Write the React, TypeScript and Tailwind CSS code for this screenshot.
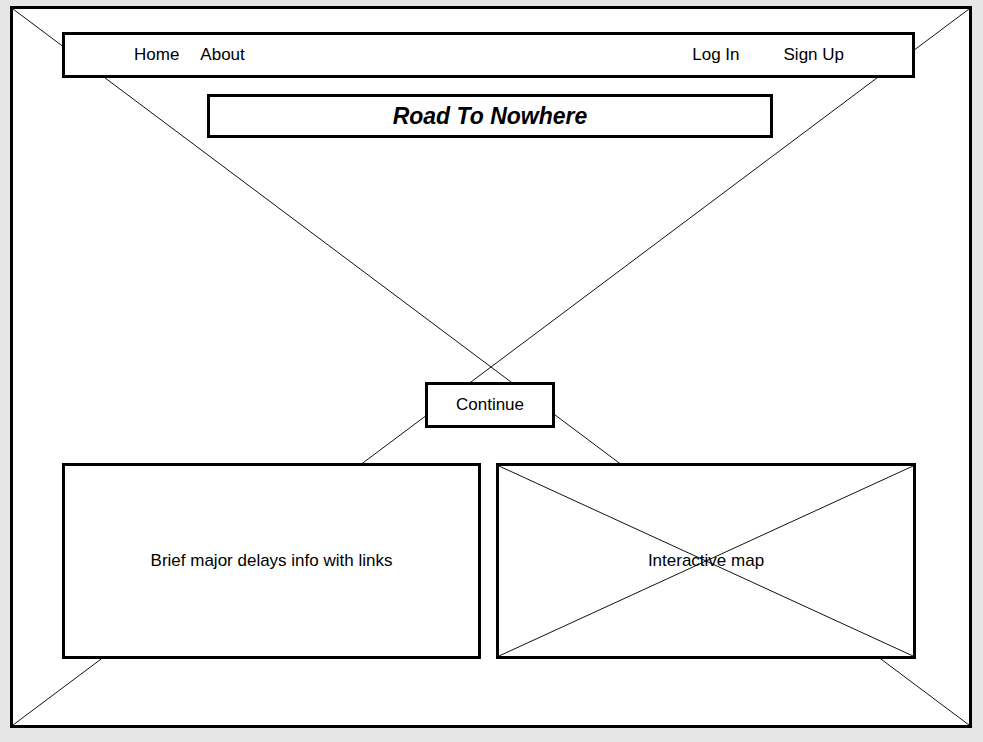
import React from 'react'

const font = { fontFamily: '"Liberation Sans", Arial, sans-serif' }

function Cross() {
  return (
    <svg className="absolute inset-0 h-full w-full" preserveAspectRatio="none">
      <line x1="0" y1="0" x2="100%" y2="100%" stroke="#111" strokeWidth="1" />
      <line x1="100%" y1="0" x2="0" y2="100%" stroke="#111" strokeWidth="1" />
    </svg>
  )
}

export default function App() {
  return (
    <div className="w-[983px] h-[742px] bg-[#e6e6e6] pt-[6px] pl-[10px] text-black" style={font}>
      <div className="relative w-[962px] h-[722px] border-[3px] border-black bg-white">
        <Cross />
        <div className="relative flex flex-col">
          <nav className="mt-[23px] ml-[49px] w-[853px] h-[46px] border-[3px] border-black bg-white flex items-center justify-between pl-[69px] pr-[68px] text-[17px]">
            <div className="flex gap-[21px]">
              <span>Home</span>
              <span>About</span>
            </div>
            <div className="flex gap-[44px]">
              <span>Log In</span>
              <span>Sign Up</span>
            </div>
          </nav>

          <div className="mt-[16px] ml-[194px] w-[566px] h-[44px] border-[3px] border-black bg-white flex items-center justify-center">
            <h1 className="text-[23px] font-bold italic leading-none">Road To Nowhere</h1>
          </div>

          <button className="mt-[244px] ml-[412px] w-[130px] h-[46px] border-[3px] border-black bg-white text-[17px] flex items-center justify-center">
            Continue
          </button>

          <div className="mt-[35px] ml-[49px] flex gap-[15px]">
            <div className="w-[419px] h-[196px] border-[3px] border-black bg-white flex items-center justify-center text-[17px]">
              Brief major delays info with links
            </div>
            <div className="relative w-[420px] h-[196px] border-[3px] border-black bg-white flex items-center justify-center text-[17px]">
              <Cross />
              <span className="relative">Interactive map</span>
            </div>
          </div>
        </div>
      </div>
    </div>
  )
}
